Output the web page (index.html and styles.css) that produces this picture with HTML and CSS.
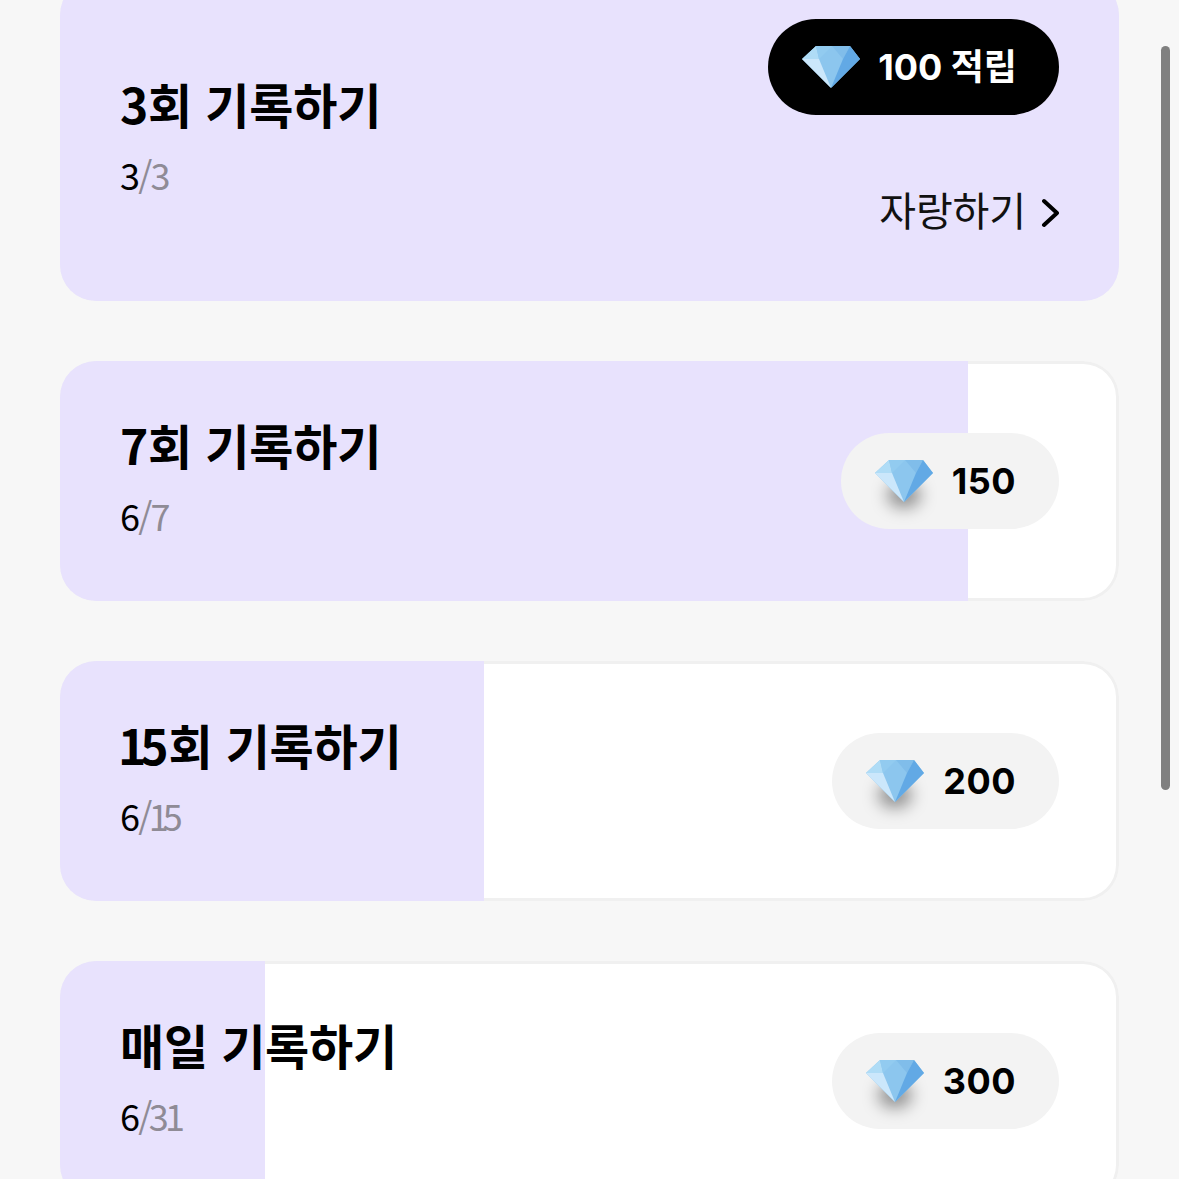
FILE: index.html
```html
<!DOCTYPE html>
<html lang="ko">
<head>
  <meta charset="UTF-8">
  <meta name="viewport" content="width=device-width, initial-scale=1.0">
  <title>기록 미션</title>
  <link rel="stylesheet" href="styles.css">
</head>
<body>
  <svg class="defs" width="0" height="0" aria-hidden="true">
    <symbol id="gem" viewBox="0 0 58 42">
      <polygon points="14,0 48,0 58,13 29,42 0,13" fill="#8cc6ee"/>
      <polygon points="0,13 17,13 29,42" fill="#cbe7fb"/>
      <polygon points="0,13 14,0 17,13" fill="#afdcf6"/>
      <polygon points="14,0 30,0 17,13" fill="#92cbf0"/>
      <polygon points="30,0 48,0 41,13" fill="#80bdea"/>
      <polygon points="48,0 58,13 41,13" fill="#62a9e5"/>
      <polygon points="41,13 58,13 29,42" fill="#62a9e5"/>
    </symbol>
  </svg>

  <div class="list">
    <div class="card">
      <div class="fill" style="width: 100%"></div>
      <div class="info">
        <div class="title">3회 기록하기</div>
        <div class="count">3<span>/3</span></div>
      </div>
      <div class="side">
        <div class="pill pill-dark">
          <svg class="gem"><use href="#gem"/></svg>
          <span class="pill-label">100 적립</span>
        </div>
        <div class="brag">
          자랑하기
          <svg class="chevron" viewBox="0 0 18 30"><path d="M3 3 L16 15 L3 27"/></svg>
        </div>
      </div>
    </div>

    <div class="card">
      <div class="fill" style="width: 85.71%"></div>
      <div class="info">
        <div class="title">7회 기록하기</div>
        <div class="count">6<span>/7</span></div>
      </div>
      <div class="pill">
        <span class="gem-wrap"><svg class="gem"><use href="#gem"/></svg></span>
        <span>150</span>
      </div>
    </div>

    <div class="card">
      <div class="fill" style="width: 40%"></div>
      <div class="info">
        <div class="title"><span class="one">1</span>5회 기록하기</div>
        <div class="count">6<span class="tight">/<span class="one">1</span>5</span></div>
      </div>
      <div class="pill">
        <span class="gem-wrap"><svg class="gem"><use href="#gem"/></svg></span>
        <span>200</span>
      </div>
    </div>

    <div class="card">
      <div class="fill" style="width: 19.35%"></div>
      <div class="info">
        <div class="title">매일 기록하기</div>
        <div class="count">6<span class="tight">/31</span></div>
      </div>
      <div class="pill">
        <span class="gem-wrap"><svg class="gem"><use href="#gem"/></svg></span>
        <span>300</span>
      </div>
    </div>
  </div>

  <div class="scrollbar"></div>
</body>
</html>
```

FILE: styles.css
```css
html, body {
  height: 100%;
}

body {
  margin: 0;
  background-color: #f7f7f7;
  font-family: "Noto Sans CJK KR", "Noto Sans", sans-serif;
  color: #000;
  overflow: hidden;
}

.defs {
  display: block;
  height: 0;
}

.list {
  display: flex;
  flex-direction: column;
  gap: 60px;
  margin-top: -21px;
  padding: 0 60px;
}

.card {
  position: relative;
  display: flex;
  justify-content: space-between;
  align-items: center;
  height: 240px;
  padding: 0 60px;
  box-sizing: border-box;
  background: #fff;
  border-radius: 36px;
  box-shadow: inset 0 0 0 3px #f0f0f0;
  overflow: hidden;
}

.card:first-child {
  height: 322px;
}

.fill {
  position: absolute;
  top: 0;
  bottom: 0;
  left: 0;
  background: #e8e2fd;
}

.info,
.side,
.pill {
  position: relative;
}

.info {
  padding-bottom: 18px;
}

.title {
  font-size: 48px;
  font-weight: 700;
  line-height: 70px;
  letter-spacing: -0.2px;
}

.title .one {
  margin-left: -2px;
  letter-spacing: -6px;
}

.count {
  margin-top: 16px;
  font-size: 36px;
  line-height: 40px;
  letter-spacing: -1.8px;
}

.count span {
  color: #8f8b96;
}

.count .tight {
  letter-spacing: -3.6px;
}

.count .one {
  letter-spacing: -6px;
}

.side {
  display: flex;
  flex-direction: column;
  align-items: flex-end;
  gap: 69px;
  align-self: flex-start;
  margin-top: 40px;
}

.pill {
  display: flex;
  align-items: center;
  gap: 19px;
  height: 96px;
  padding: 0 43px 0 34px;
  border-radius: 48px;
  background: #f3f3f3;
  font-family: Inter, "Noto Sans CJK KR", sans-serif;
  font-size: 36px;
  font-weight: 700;
  letter-spacing: 0.5px;
}

.pill-dark {
  gap: 18px;
  padding-right: 42px;
  background: #000;
  color: #fff;
  letter-spacing: 0;
}

.pill-label {
  margin-top: -6px;
}

.gem {
  display: block;
  width: 58px;
  height: 42px;
}

.gem-wrap {
  position: relative;
  display: block;
}

.gem-wrap::before {
  content: "";
  position: absolute;
  left: 12px;
  top: 22px;
  width: 34px;
  height: 26px;
  border-radius: 50%;
  background: rgba(0, 0, 0, 0.4);
  filter: blur(8px);
}

.gem-wrap .gem {
  position: relative;
}

.brag {
  display: flex;
  align-items: center;
  gap: 15px;
  font-size: 40px;
  line-height: 50px;
  letter-spacing: -0.1px;
  color: #111;
}

.chevron {
  width: 18px;
  height: 30px;
  margin-top: 8px;
  fill: none;
  stroke: #000;
  stroke-width: 4;
  stroke-linecap: round;
  stroke-linejoin: round;
}

.scrollbar {
  position: absolute;
  top: 46px;
  left: 1161px;
  width: 9px;
  height: 744px;
  border-radius: 5px;
  background: #808080;
}
```
